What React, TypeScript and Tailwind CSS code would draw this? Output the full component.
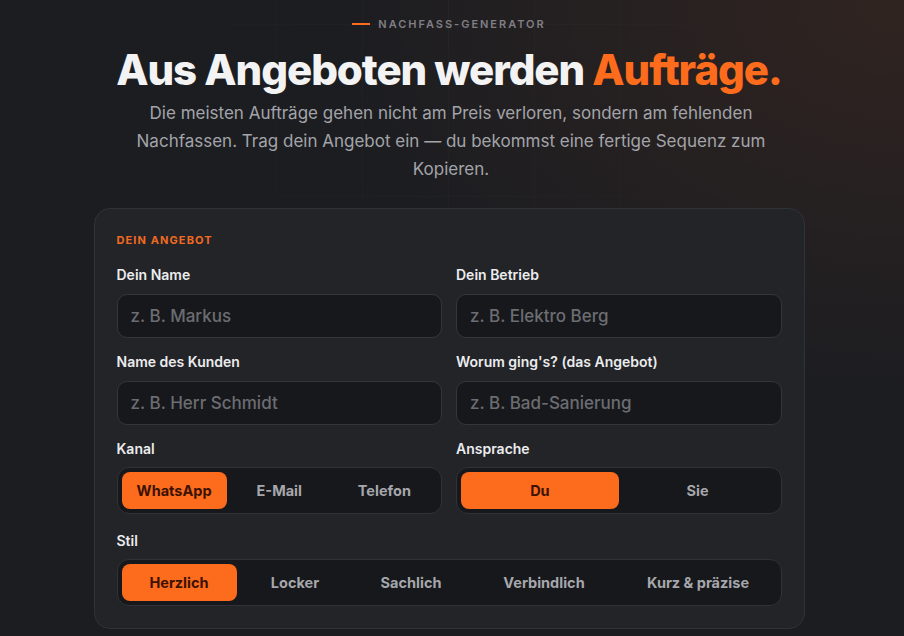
import React, { useState } from 'react';

const channels = ['WhatsApp', 'E-Mail', 'Telefon'];
const salutations = ['Du', 'Sie'];
const styles = ['Herzlich', 'Locker', 'Sachlich', 'Verbindlich', 'Kurz & präzise'];

const Field: React.FC<{ label: string; placeholder: string }> = ({ label, placeholder }) => (
  <div className="flex flex-col gap-[9px]">
    <label className="text-[14px] leading-5 font-semibold text-[#ececee]">{label}</label>
    <input
      placeholder={placeholder}
      className="h-[44px] w-full rounded-[10px] border border-[#34363b] bg-[#17181b] px-[13px] text-[17px] font-medium text-[#ececee] placeholder:text-[#6c6d72] outline-none"
    />
  </div>
);

interface SegmentProps {
  label: string;
  options: string[];
  value: string;
  onChange: (v: string) => void;
  cols: string;
}

const Segment: React.FC<SegmentProps> = ({ label, options, value, onChange, cols }) => (
  <div className="flex flex-col gap-2">
    <span className="text-[14px] leading-5 font-semibold text-[#ececee]">{label}</span>
    <div className={`grid ${cols} h-[47px] rounded-[12px] border border-[#303237] bg-[#17181b] p-1`}>
      {options.map(o => (
        <button
          key={o}
          onClick={() => onChange(o)}
          className={
            o === value
              ? 'rounded-[8px] bg-[#fd6b1c] text-[14.5px] font-bold text-[#3b1204]'
              : 'rounded-[8px] text-[14.5px] font-bold text-[#a6a7ac]'
          }
        >
          {o}
        </button>
      ))}
    </div>
  </div>
);

export default function App() {
  const [channel, setChannel] = useState('WhatsApp');
  const [salutation, setSalutation] = useState('Du');
  const [style, setStyle] = useState('Herzlich');

  return (
    <div className="relative min-h-[636px] overflow-hidden bg-[#1c1d21] font-['Inter',sans-serif] bg-[radial-gradient(ellipse_at_top_right,rgba(255,107,26,0.09),transparent_45%)]">
      {/* faint background grid */}
      <div className="pointer-events-none absolute inset-0 bg-[linear-gradient(rgba(255,255,255,0.025)_1px,transparent_1px),linear-gradient(90deg,rgba(255,255,255,0.025)_1px,transparent_1px)] bg-[size:86px_86px] bg-[position:18px_24px] [mask-image:radial-gradient(ellipse_at_top,black,transparent_60%)]" />

      <div className="relative flex flex-col items-center pt-4 pr-[6px]">
        <div className="flex items-center gap-2">
          <span className="h-[2px] w-[18px] bg-[#fd6b1c]" />
          <span className="text-[11px] leading-4 font-semibold tracking-[0.18em] text-[#807f85]">NACHFASS-GENERATOR</span>
        </div>
        <h1 className="mt-4 text-[42px] leading-[44px] font-extrabold tracking-[-0.025em] text-[#f3f3f4]">
          Aus Angeboten werden <span className="text-[#fd6b1c]">Aufträge.</span>
        </h1>
        <p className="mt-[7px] max-w-[640px] pl-[4px] text-center text-[17px] leading-[28px] text-[#a3a4a9]">
          Die meisten Aufträge gehen nicht am Preis verloren, sondern am fehlenden Nachfassen. Trag dein Angebot ein — du bekommst eine fertige Sequenz zum Kopieren.
        </p>

        <div className="mt-[25px] w-[711px] rounded-[16px] border border-[#2f3237] bg-[#222428] px-[22px] pt-[23px] pb-[22px]">
          <div className="mb-[17px] text-[11px] leading-4 font-bold tracking-[0.1em] text-[#f06a22]">DEIN ANGEBOT</div>
          <div className="grid grid-cols-2 gap-x-[14px] gap-y-[14px]">
            <Field label="Dein Name" placeholder="z. B. Markus" />
            <Field label="Dein Betrieb" placeholder="z. B. Elektro Berg" />
            <Field label="Name des Kunden" placeholder="z. B. Herr Schmidt" />
            <Field label="Worum ging's? (das Angebot)" placeholder="z. B. Bad-Sanierung" />
            <Segment label="Kanal" options={channels} value={channel} onChange={setChannel} cols="grid-cols-3" />
            <Segment label="Ansprache" options={salutations} value={salutation} onChange={setSalutation} cols="grid-cols-2" />
            <div className="col-span-2 mt-[3px]">
              <Segment
                label="Stil"
                options={styles}
                value={style}
                onChange={setStyle}
                cols="grid-cols-[115fr_117fr_115fr_151fr_157fr]"
              />
            </div>
          </div>
        </div>
      </div>
    </div>
  );
}
